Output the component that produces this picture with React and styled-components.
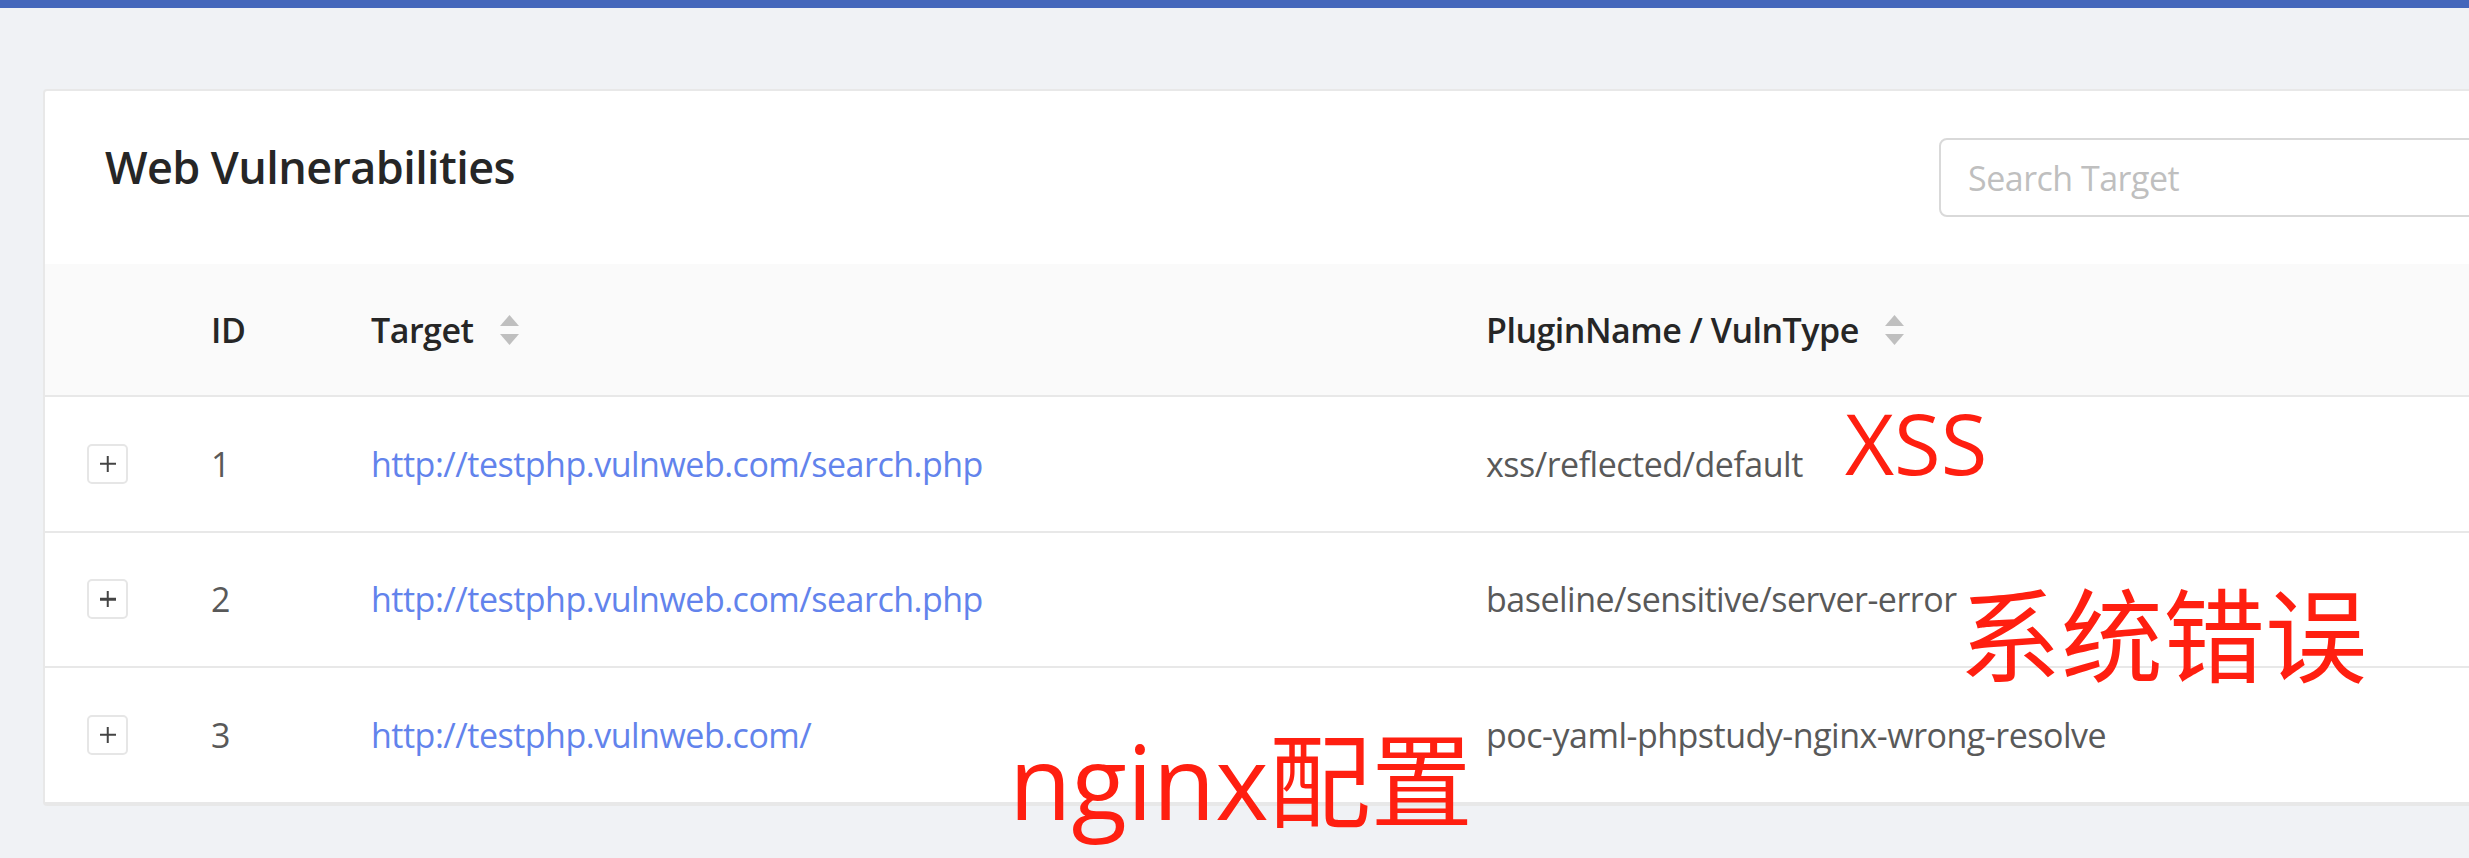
import styled, { createGlobalStyle } from 'styled-components';

const GlobalStyle = createGlobalStyle`
  html, body {
    margin: 0;
    padding: 0;
  }
  body {
    background: #f0f2f5;
    font-family: 'Open Sans', 'Noto Sans CJK SC', sans-serif;
    overflow: hidden;
  }
`;

const vulns = [
  { id: 1, target: 'http://testphp.vulnweb.com/search.php', plugin: 'xss/reflected/default' },
  { id: 2, target: 'http://testphp.vulnweb.com/search.php', plugin: 'baseline/sensitive/server-error' },
  { id: 3, target: 'http://testphp.vulnweb.com/', plugin: 'poc-yaml-phpstudy-nginx-wrong-resolve' },
];

function SortIcon() {
  return (
    <Sorter width="19" height="30" viewBox="0 0 19 30">
      <polygon points="9.5,0 19,11 0,11" />
      <polygon points="0,19 19,19 9.5,30" />
    </Sorter>
  );
}

export default function App() {
  return (
    <Page>
      <GlobalStyle />
      <TopBar />
      <Content>
        <Card>
          <CardHead>
            <Title>Web Vulnerabilities</Title>
            <Search placeholder="Search Target" />
          </CardHead>
          <HeadRow>
            <span />
            <HeadCell>ID</HeadCell>
            <HeadCell>Target <SortIcon /></HeadCell>
            <HeadCell>PluginName / VulnType <SortIcon /></HeadCell>
          </HeadRow>
          {vulns.map(v => (
            <Row key={v.id}>
              <span><Expand aria-label="expand" /></span>
              <Cell>{v.id}</Cell>
              <Link href="#">{v.target}</Link>
              <Cell>{v.plugin}</Cell>
            </Row>
          ))}
        </Card>
      </Content>

      <Note $left={1845} $top={400} $size={85}>XSS</Note>
      <Note $left={1959} $top={585} $size={102}>系统错误</Note>
      <Note $left={1009} $top={730} $size={102}>nginx配置</Note>
    </Page>
  );
}

const Page = styled.div`
  position: relative;
  width: 2469px;
  height: 858px;
  overflow: hidden;
`;

const TopBar = styled.div`
  height: 8px;
  background: #4467bb;
`;

const Content = styled.div`
  padding: 81px 0 0 43px;
`;

const Card = styled.div`
  width: 2658px;
  box-sizing: border-box;
  background: #fff;
  border: 2px solid #e8e8e8;
  border-radius: 4px;
`;

const CardHead = styled.div`
  height: 173px;
  padding: 0 60px;
  display: flex;
  align-items: center;
  justify-content: space-between;
`;

const Title = styled.div`
  padding-bottom: 22px;
  font-size: 45px;
  font-weight: 600;
  letter-spacing: -0.6px;
  color: #262626;
`;

const Search = styled.input`
  width: 700px;
  height: 79px;
  box-sizing: border-box;
  border: 2px solid #d9d9d9;
  border-radius: 8px;
  padding: 0 27px;
  font-family: 'Open Sans', sans-serif;
  font-size: 34px;
  letter-spacing: -0.5px;
  color: #595959;
  outline: none;

  &::placeholder {
    color: #bfbfbf;
  }
`;

const Grid = styled.div`
  display: grid;
  grid-template-columns: 166px 160px 1115px 1fr;
  align-items: center;
  border-bottom: 2px solid #e8e8e8;
  font-size: 34px;
  letter-spacing: -0.5px;
`;

const HeadRow = styled(Grid)`
  height: 131px;
  background: #fafafa;
`;

const HeadCell = styled.div`
  display: flex;
  align-items: center;
  font-weight: 600;
  color: #262626;
`;

const Sorter = styled.svg`
  margin-left: 26px;
  fill: #bfbfbf;
`;

const Row = styled(Grid)`
  height: 133.5px;
  color: #595959;
`;

const Cell = styled.div`
  white-space: nowrap;
`;

const Link = styled.a`
  color: #6283ec;
  text-decoration: none;
  white-space: nowrap;
`;

const Expand = styled.button`
  position: relative;
  display: block;
  margin-left: 42px;
  width: 41px;
  height: 40px;
  padding: 0;
  background: #fff;
  border: 2px solid #e6e6e6;
  border-radius: 5px;

  &::before,
  &::after {
    content: '';
    position: absolute;
    left: 50%;
    top: 50%;
    background: #444;
    transform: translate(-50%, -50%);
  }
  &::before {
    width: 16px;
    height: 2.5px;
  }
  &::after {
    width: 2.5px;
    height: 16px;
  }
`;

const Note = styled.div`
  position: absolute;
  left: ${p => p.$left}px;
  top: ${p => p.$top}px;
  font-family: 'Open Sans', 'Noto Sans CJK SC', sans-serif;
  font-size: ${p => p.$size}px;
  line-height: 1;
  color: #ff1f10;
  white-space: nowrap;
`;
